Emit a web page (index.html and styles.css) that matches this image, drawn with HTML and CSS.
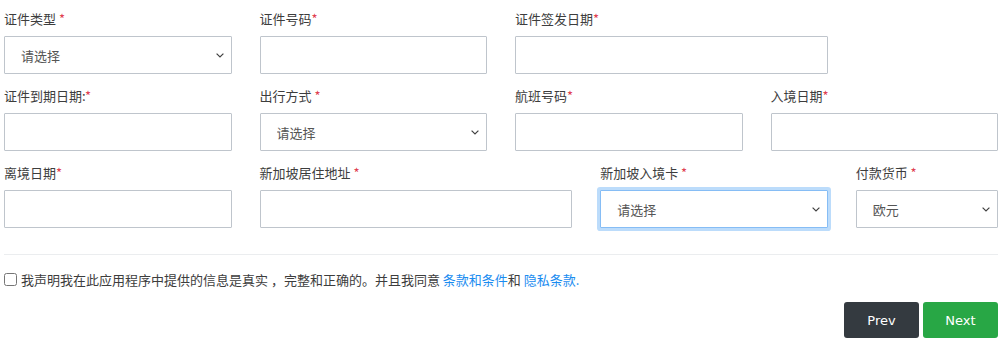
FILE: index.html
```html
<!DOCTYPE html>
<html lang="zh-CN">
<head>
  <meta charset="UTF-8">
  <title>入境申请</title>
  <link rel="stylesheet" href="styles.css">
</head>
<body>

  <form class="apply-form">
    <!-- 第一行 -->
    <div class="form-row">
      <div class="field span-3">
        <label>证件类型 <span class="req">*</span></label>
        <select class="control"><option>请选择</option></select>
      </div>
      <div class="field span-3">
        <label>证件号码<span class="req">*</span></label>
        <input class="control" type="text">
      </div>
      <div class="field span-4">
        <label>证件签发日期<span class="req">*</span></label>
        <input class="control" type="text">
      </div>
    </div>

    <!-- 第二行 -->
    <div class="form-row">
      <div class="field span-3">
        <label>证件到期日期:<span class="req">*</span></label>
        <input class="control" type="text">
      </div>
      <div class="field span-3">
        <label>出行方式 <span class="req">*</span></label>
        <select class="control"><option>请选择</option></select>
      </div>
      <div class="field span-3">
        <label>航班号码<span class="req">*</span></label>
        <input class="control" type="text">
      </div>
      <div class="field span-3">
        <label>入境日期<span class="req">*</span></label>
        <input class="control" type="text">
      </div>
    </div>

    <!-- 第三行 -->
    <div class="form-row">
      <div class="field span-3">
        <label>离境日期<span class="req">*</span></label>
        <input class="control" type="text">
      </div>
      <div class="field span-4">
        <label>新加坡居住地址 <span class="req">*</span></label>
        <input class="control" type="text">
      </div>
      <div class="field span-3">
        <label>新加坡入境卡 <span class="req">*</span></label>
        <select class="control focused"><option>请选择</option></select>
      </div>
      <div class="field span-2">
        <label>付款货币 <span class="req">*</span></label>
        <select class="control"><option>欧元</option></select>
      </div>
    </div>

    <hr class="divider">

    <div class="agree">
      <input type="checkbox" id="agree">
      <label for="agree">我声明我在此应用程序中提供的信息是真实 ，完整和正确的。并且我同意 <a href="#">条款和条件</a>和 <a href="#">隐私条款.</a></label>
    </div>

    <div class="actions">
      <button type="button" class="btn btn-dark">Prev</button>
      <button type="button" class="btn btn-green">Next</button>
    </div>
  </form>

</body>
</html>
```

FILE: styles.css
```css
* { box-sizing: border-box; }
body {
  margin: 0;
  padding: 9px 0 0 4px;
  font-family: "Noto Sans CJK SC", "Noto Sans", sans-serif;
  font-size: 13px;
  color: #3d3d3d;
  background: #fff;
}

.apply-form { width: 994px; }

.form-row {
  display: grid;
  grid-template-columns: repeat(12, 1fr);
  column-gap: 28px;
  margin-bottom: 12px;
}
.span-2 { grid-column: span 2; }
.span-3 { grid-column: span 3; }
.span-4 { grid-column: span 4; }

.field label {
  display: block;
  height: 20px;
  line-height: 20px;
  margin-bottom: 7px;
}
.req { color: #e0404f; }

.control {
  display: block;
  width: 100%;
  height: 38px;
  margin: 0;
  padding: 0 16px;
  border: 1px solid #bfc5cc;
  border-radius: 1px;
  background: #fff;
  font-family: inherit;
  font-size: 13px;
  color: #555;
  outline: none;
}
select.control {
  -webkit-appearance: none;
  appearance: none;
  background-image: url("data:image/svg+xml,%3Csvg xmlns='http://www.w3.org/2000/svg' width='8' height='5' viewBox='0 0 8 5'%3E%3Cpath d='M0.6 0.6 L4 4 L7.4 0.6' fill='none' stroke='%23444' stroke-width='1.2'/%3E%3C/svg%3E");
  background-repeat: no-repeat;
  background-position: right 7px center;
  background-size: 8px 5px;
}
.control.focused {
  border-color: #86bdf5;
  box-shadow: 0 0 0 3px #bcdcfb;
}

.divider {
  margin: 26px 0 0;
  border: none;
  border-top: 1px solid #ebedef;
}

.agree {
  display: flex;
  align-items: center;
  height: 48px;
  padding-top: 1px;
}
.agree input {
  width: 13px;
  height: 13px;
  margin: 0 4px 0 0;
}
.agree a { color: #1a8cf0; text-decoration: none; }

.actions {
  display: flex;
  justify-content: flex-end;
  gap: 4px;
  margin-top: -1px;
  padding-right: 0;
}
.btn {
  width: 75px;
  height: 36px;
  border: none;
  border-radius: 3px;
  color: #fff;
  font-family: "DejaVu Sans", sans-serif;
  font-size: 13px;
  cursor: pointer;
}
.btn-dark { background: #343a40; }
.btn-green { background: #28a745; }
```
